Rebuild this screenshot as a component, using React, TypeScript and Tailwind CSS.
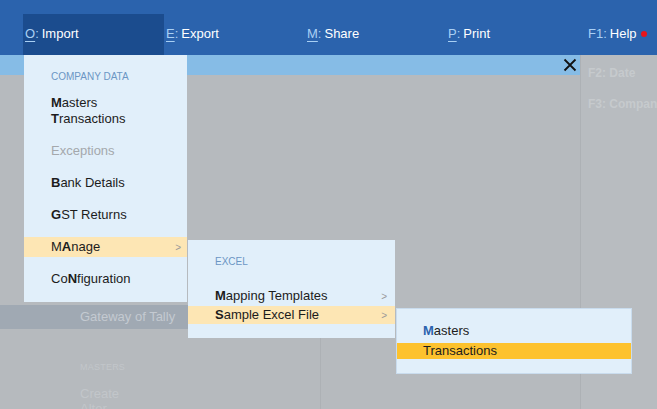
import type { ReactNode } from "react";

const tabs = [
  { key: "O", label: "Import", active: true },
  { key: "E", label: "Export" },
  { key: "M", label: "Share" },
  { key: "P", label: "Print" },
];

function Row({
  children,
  highlight,
  arrow,
  className = "",
}: {
  children: ReactNode;
  highlight?: string;
  arrow?: boolean;
  className?: string;
}) {
  return (
    <div
      className={`flex shrink-0 items-center justify-between pl-[27px] pr-[6px] text-[13px] text-[#1c1c1c] ${highlight ?? ""} ${className}`}
    >
      <span>{children}</span>
      {arrow && <span className="text-[10px] text-[#9a9a9a]">&gt;</span>}
    </div>
  );
}

export default function App() {
  return (
    <div className="relative h-[409px] w-[657px] overflow-hidden bg-[#b6babe] font-['Liberation_Sans',Arial,sans-serif]">
      {/* top menu bar */}
      <header className="flex h-[55px] items-end bg-[#2b63ad] pl-[23px]">
        {tabs.map((t) => (
          <div
            key={t.key}
            className={`flex h-[41px] w-[141px] items-center pl-[2px] pb-[1px] text-[13px] ${t.active ? "bg-[#1b4c8e]" : ""}`}
          >
            <span className="text-[#a9d0f4]">
              <span className="underline underline-offset-[3px]">{t.key}</span>:
            </span>
            <span className="ml-[3px] text-white">{t.label}</span>
          </div>
        ))}
        <div className="flex h-[41px] flex-1 items-center pl-[1px] pb-[1px] text-[13px]">
          <span className="text-[#a9d0f4]">F1:</span>
          <span className="ml-[3px] text-white">Help</span>
          <span className="ml-[4px] h-[6px] w-[6px] rounded-full bg-[#e8141a]" />
        </div>
      </header>

      <div className="flex h-[354px]">
        {/* main area */}
        <div className="flex w-[580px] shrink-0 flex-col overflow-hidden">
          <div className="flex h-[20px] shrink-0 items-center justify-end bg-[#86bce6] pr-[3px]">
            <svg width="14" height="14" viewBox="0 0 14 14">
              <path d="M1.5 1.5 L12.5 12.5 M12.5 1.5 L1.5 12.5" stroke="#111" strokeWidth="1.8" />
            </svg>
          </div>
          <div className="mt-[230px] flex h-[24px] w-[321px] shrink-0 items-center bg-[#a0a9b3] pl-[80px] text-[13px] text-[#c4cad1]">
            Gateway of Tally
          </div>
          <div className="min-h-0 w-[321px] flex-1 border-r border-[#adb1b5] pl-[80px] pt-[33px] text-[#c2c6ca]">
            <div className="text-[9px] leading-[10px] tracking-wide">MASTERS</div>
            <div className="mt-[14px] text-[13px] leading-[15px]">Create</div>
            <div className="text-[13px] leading-[15px]">Alter</div>
          </div>
        </div>
        {/* right button panel */}
        <div className="flex-1 overflow-hidden whitespace-nowrap border-l border-[#adb1b5] bg-[#b8bcc0] pl-[7px] pt-[9px] text-[12px] font-bold text-[#c6cacd]">
          <div>F2: Date</div>
          <div className="mt-[13px]">F3: Company</div>
        </div>
      </div>

      {/* Import menu */}
      <div className="absolute left-[24px] top-[55px] flex h-[247px] w-[163px] flex-col bg-[#e1effa] pt-[15px]">
        <div className="h-[14px] pl-[27px] text-[10px] leading-[14px] text-[#6b96c4]">COMPANY DATA</div>
        <Row className="mt-[11px] h-[16px]">
          <b>M</b>asters
        </Row>
        <Row className="h-[16px]">
          <b>T</b>ransactions
        </Row>
        <Row className="mt-[16px] h-[16px] !text-[#a4a8ac]">Exceptions</Row>
        <Row className="mt-[16px] h-[16px]">
          <b>B</b>ank Details
        </Row>
        <Row className="mt-[16px] h-[16px]">
          <b>G</b>ST Returns
        </Row>
        <Row className="mt-[14px] h-[20px]" highlight="bg-[#fde6b4]" arrow>
          M<b>A</b>nage
        </Row>
        <Row className="mt-[14px] h-[16px]">
          Co<b>N</b>figuration
        </Row>
      </div>

      {/* Manage submenu */}
      <div className="absolute left-[188px] top-[240px] flex h-[98px] w-[207px] flex-col bg-[#e1effa] pt-[15px]">
        <div className="h-[14px] pl-[27px] text-[10px] leading-[14px] text-[#6b96c4]">EXCEL</div>
        <Row className="mt-[18px] h-[18px] !pr-[8px]" arrow>
          <b>M</b>apping Templates
        </Row>
        <Row className="mt-[1px] h-[18px] !pr-[8px]" highlight="bg-[#fde6b4]" arrow>
          <b>S</b>ample Excel File
        </Row>
      </div>

      {/* Sample Excel File submenu */}
      <div className="absolute left-[396px] top-[308px] flex h-[66px] w-[236px] flex-col border border-[#c9dcee] bg-[#e1effa] pt-[14px]">
        <Row className="h-[16px] !pl-[26px]">
          <b className="text-[#2b63ad]">M</b>asters
        </Row>
        <Row className="mt-[4px] h-[16px] !pl-[26px]" highlight="bg-[#fdc22e]">
          Transactions
        </Row>
      </div>
    </div>
  );
}
